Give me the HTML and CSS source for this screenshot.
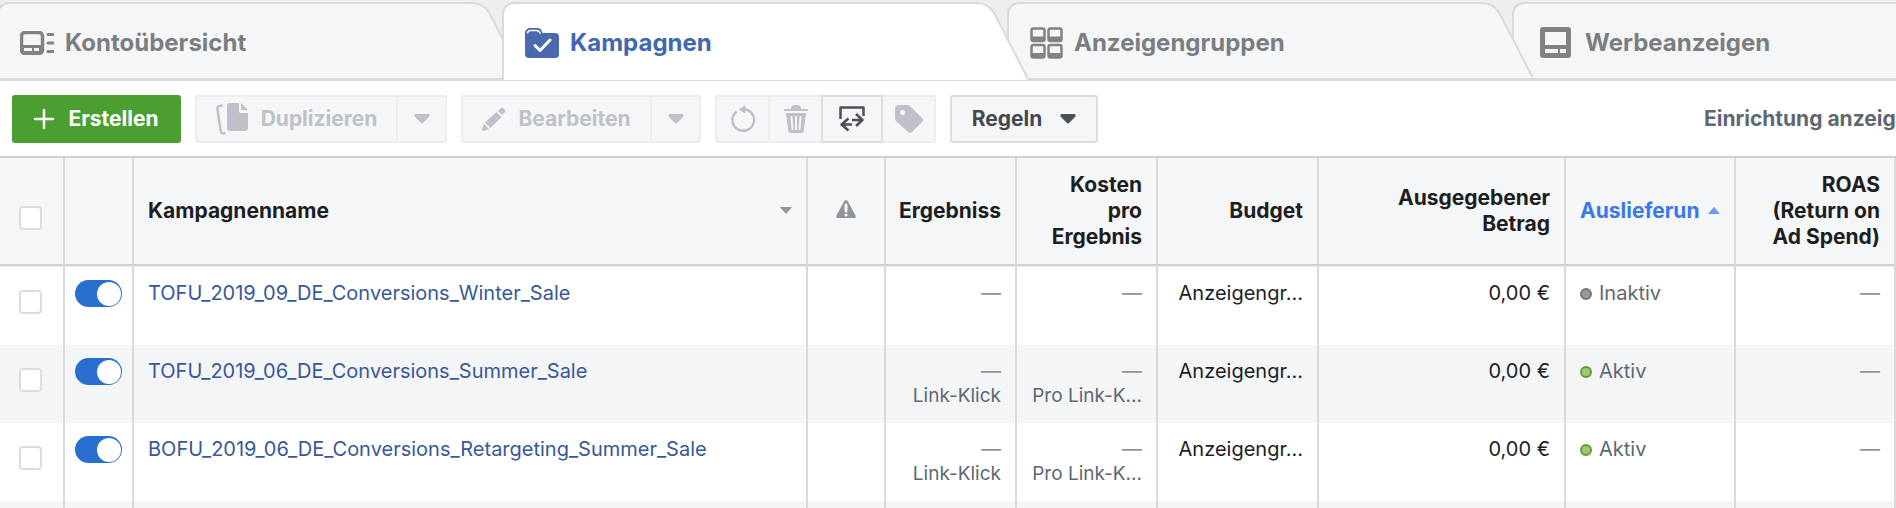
FILE: index.html
```
<!DOCTYPE html>
<html lang="de">
<head>
    <meta charset="UTF-8">
    <meta name="viewport" content="width=device-width, initial-scale=1.0">
    <title>Werbeanzeigenmanager</title>
    <link rel="stylesheet" href="styles.css">
</head>
<body>

    <!-- Reiter -->
    <nav class="tabs">
        <a href="#" class="tab">
            <svg class="tab-cap" viewBox="0 0 54 78"><path class="fill" d="M0 1C9 1 15 4 19 11L53 76V78H0Z"/><path class="line" d="M0 1C9 1 15 4 19 11L53 77"/></svg>
            <svg class="tab-icon" width="34" height="24" viewBox="0 0 34 24"><rect x="1.500" y="1.500" width="21" height="21" rx="3.500" fill="none" stroke="#828282" stroke-width="3.500"/><path d="M2 14h20v8H2z" fill="#828282"/><path d="M4 17h8v3H4zM14 17h5v3h-5z" fill="#f5f6f8"/><path d="M28 3.500h5M28 12h5M28 20.500h5" stroke="#828282" stroke-width="3" stroke-linecap="round"/></svg>
            <span>Kontoübersicht</span>
        </a>
        <a href="#" class="tab active">
            <svg class="tab-cap" viewBox="0 0 54 78"><path class="fill" d="M0 1C9 1 15 4 19 11L53 76V78H0Z"/><path class="line" d="M0 1C9 1 15 4 19 11L53 77"/></svg>
            <svg class="tab-icon" width="34" height="30" viewBox="0 0 34 30"><path d="M0 5a5 5 0 0 1 5-5h7a5 5 0 0 1 5 4l1 1h12a4 4 0 0 1 4 4v17a4 4 0 0 1-4 4H4a4 4 0 0 1-4-4z" fill="#4a69ae"/><path d="M2.500 5.500c0-2 1-3 3-3h6c2 0 3 1 4 3" fill="none" stroke="#fff" stroke-width="1.500"/><path d="M10 17.500l5 5L25 12" fill="none" stroke="#fff" stroke-width="3" stroke-linecap="round" stroke-linejoin="round"/></svg>
            <span>Kampagnen</span>
        </a>
        <a href="#" class="tab">
            <svg class="tab-cap" viewBox="0 0 54 78"><path class="fill" d="M0 1C9 1 15 4 19 11L53 76V78H0Z"/><path class="line" d="M0 1C9 1 15 4 19 11L53 77"/></svg>
            <svg class="tab-icon" width="33" height="32" viewBox="0 0 33 32"><g fill="none" stroke="#828282" stroke-width="2.500"><rect x="1.500" y="1.500" width="13" height="12.500" rx="2"/><rect x="18.500" y="1.500" width="13" height="12.500" rx="2"/><rect x="1.500" y="18" width="13" height="12.500" rx="2"/><rect x="18.500" y="18" width="13" height="12.500" rx="2"/></g><path d="M2 9.500h12v5H2zM19 9.500h12v5H19zM2 26h12v5H2zM19 26h12v5H19z" fill="#828282"/></svg>
            <span>Anzeigengruppen</span>
        </a>
        <a href="#" class="tab last">
            <svg class="tab-icon" width="31" height="31" viewBox="0 0 31 31"><path fill-rule="evenodd" d="M3 0h25a3 3 0 0 1 3 3v25a3 3 0 0 1-3 3H3a3 3 0 0 1-3-3V3a3 3 0 0 1 3-3zM5 5v13h21V5zM5 22v4h13v-4zM20 22v4h6v-4z" fill="#828282"/></svg>
            <span>Werbeanzeigen</span>
        </a>
    </nav>

    <!-- Werkzeugleiste -->
    <div class="toolbar">
        <button class="btn create">
            <svg width="20" height="20" viewBox="0 0 20 20"><path d="M10 1v18M1 10h18" stroke="#fff" stroke-width="2.500" stroke-linecap="round"/></svg>
            Erstellen
        </button>

        <div class="group">
            <button class="btn duplicate" disabled>
                <svg width="33" height="33" viewBox="0 0 33 33"><path d="M7 3.500L4 4c-2 0-3 1-2.500 3l3 21c0 3 2 4 5 3" fill="none" stroke="#bec1c9" stroke-width="2.500"/><path d="M14 1h9v8a2 2 0 0 0 2 2h7v15a3 3 0 0 1-3 3H14a3 3 0 0 1-3-3V4a3 3 0 0 1 3-3zM25 1l7 7h-7z" fill="#bec1c9"/></svg>
                Duplizieren
            </button>
            <button class="btn arrow" disabled aria-label="Mehr Optionen zum Duplizieren">
                <svg width="16" height="10" viewBox="0 0 16 10"><path d="M2 0h12c2 0 2 2 1 3L9 9q-1 1-2 0L1 3C0 2 0 0 2 0z" fill="#bec1c9"/></svg>
            </button>
        </div>

        <div class="group">
            <button class="btn edit" disabled>
                <svg width="24" height="24" viewBox="0 0 24 24"><path d="M16 4l3-3q1-1 2 0l2 2q1 1 0 2l-3 3zM14.500 5l5 5L8.500 21l-5.500-5.500zM2 17l5 5-5 2q-2 0-2-2z" fill="#bec1c9"/></svg>
                Bearbeiten
            </button>
            <button class="btn arrow" disabled aria-label="Mehr Optionen zum Bearbeiten">
                <svg width="16" height="10" viewBox="0 0 16 10"><path d="M2 0h12c2 0 2 2 1 3L9 9q-1 1-2 0L1 3C0 2 0 0 2 0z" fill="#bec1c9"/></svg>
            </button>
        </div>

        <div class="group icons">
            <button class="btn" disabled aria-label="Zurücksetzen">
                <svg width="26" height="28" viewBox="0 0 26 28"><path d="M6 7a10.800 10.800 0 1 0 7-2.800" fill="none" stroke="#bec1c9" stroke-width="2.500" stroke-linecap="round"/><path d="M15 1v7L9.500 4.500z" fill="#bec1c9" stroke="#bec1c9" stroke-linejoin="round"/></svg>
            </button>
            <button class="btn" disabled aria-label="Löschen">
                <svg width="24" height="28" viewBox="0 0 24 28"><path d="M1 5h22M8 4q0-3 3-3h2q3 0 3 3" fill="#bec1c9" stroke="#bec1c9" stroke-width="2" stroke-linecap="round"/><path d="M2 8h20l-2 17q0 3-3 3H7q-3 0-3-3z" fill="#bec1c9"/><path d="M7.500 12l1 12M12 12v12M16.500 12l-1 12" stroke="#f5f6f8" stroke-width="2" stroke-linecap="round"/></svg>
            </button>
            <button class="btn selected" aria-label="Exportieren und importieren">
                <svg width="26" height="26" viewBox="0 0 26 26" fill="none" stroke="#4b4f56" stroke-width="2.500" stroke-linejoin="round"><path d="M1.500 13V1.500h23V10"/><path d="M13 14h11M17 8l6.500 6-6.500 6M13 18.500H3M9.500 12.500l-7 6 7 6"/></svg>
            </button>
            <button class="btn" disabled aria-label="Tag hinzufügen">
                <svg width="28" height="28" viewBox="0 0 28 28"><path fill-rule="evenodd" d="M0 4a4 4 0 0 1 4-4h8q2 0 3 1l12 12q2 2 0 4L17 27q-2 2-4 0L1 16q-1-1-1-3zM7.500 5a2.500 2.500 0 1 0 0 5 2.500 2.500 0 0 0 0-5z" fill="#bec1c9"/></svg>
            </button>
        </div>

        <button class="btn rules">
            Regeln
            <svg width="16" height="10" viewBox="0 0 16 10"><path d="M2 0h12c2 0 2 2 1 3L9 9q-1 1-2 0L1 3C0 2 0 0 2 0z" fill="#4b4f56"/></svg>
        </button>

        <a href="#" class="setup">Einrichtung anzeig</a>
    </div>

    <!-- Kampagnentabelle -->
    <table class="campaigns">
        <colgroup>
            <col class="c-check">
            <col class="c-toggle">
            <col>
            <col class="c-warn">
            <col class="c-result">
            <col class="c-cost">
            <col class="c-budget">
            <col class="c-spent">
            <col class="c-status">
            <col class="c-roas">
        </colgroup>
        <thead>
            <tr>
                <th class="check"><input type="checkbox" aria-label="Alle auswählen"></th>
                <th></th>
                <th><div class="sort"><span>Kampagnenname</span><svg width="12" height="8" viewBox="0 0 12 8"><path d="M0 0h12L6 7z" fill="#90949c"/></svg></div></th>
                <th class="warn"><svg width="20" height="18" viewBox="0 0 20 18"><path d="M8 1.500q2-3 4 0l7.500 14q1 2.500-1.500 2.500H2q-2.500 0-1.500-2.500z" fill="#90949c"/><path d="M10 5v6" stroke="#f5f6f8" stroke-width="3" stroke-linecap="round"/><circle cx="10" cy="15" r="1.600" fill="#f5f6f8"/></svg></th>
                <th class="num tight">Ergebniss</th>
                <th class="num">Kosten<br>pro<br>Ergebnis</th>
                <th class="num">Budget</th>
                <th class="num">Ausgegebener<br>Betrag</th>
                <th class="sorted"><div class="sort"><span>Auslieferun</span><svg width="12" height="8" viewBox="0 0 12 8"><path d="M0 7h12L6 0z" fill="#6798f5"/></svg></div></th>
                <th class="num">ROAS<br>(Return on<br>Ad Spend)</th>
            </tr>
        </thead>
        <tbody>
            <tr>
                <td class="check"><input type="checkbox" aria-label="Winter Sale auswählen"></td>
                <td class="switch"><input type="checkbox" class="toggle" checked aria-label="Winter Sale ein/aus"></td>
                <td><a href="#">TOFU_2019_09_DE_Conversions_Winter_Sale</a></td>
                <td></td>
                <td class="num dash">—</td>
                <td class="num dash">—</td>
                <td class="num">Anzeigengr...</td>
                <td class="num">0,00 €</td>
                <td class="status"><i class="dot"></i>Inaktiv</td>
                <td class="num dash">—</td>
            </tr>
            <tr>
                <td class="check"><input type="checkbox" aria-label="Summer Sale auswählen"></td>
                <td class="switch"><input type="checkbox" class="toggle" checked aria-label="Summer Sale ein/aus"></td>
                <td><a href="#">TOFU_2019_06_DE_Conversions_Summer_Sale</a></td>
                <td></td>
                <td class="num dash">—<small>Link-Klick</small></td>
                <td class="num dash">—<small>Pro Link-K...</small></td>
                <td class="num">Anzeigengr...</td>
                <td class="num">0,00 €</td>
                <td class="status"><i class="dot on"></i>Aktiv</td>
                <td class="num dash">—</td>
            </tr>
            <tr>
                <td class="check"><input type="checkbox" aria-label="Retargeting auswählen"></td>
                <td class="switch"><input type="checkbox" class="toggle" checked aria-label="Retargeting ein/aus"></td>
                <td><a href="#">BOFU_2019_06_DE_Conversions_Retargeting_Summer_Sale</a></td>
                <td></td>
                <td class="num dash">—<small>Link-Klick</small></td>
                <td class="num dash">—<small>Pro Link-K...</small></td>
                <td class="num">Anzeigengr...</td>
                <td class="num">0,00 €</td>
                <td class="status"><i class="dot on"></i>Aktiv</td>
                <td class="num dash">—</td>
            </tr>
            <tr class="rest">
                <td></td><td></td><td></td><td></td><td></td><td></td><td></td><td></td><td></td><td></td>
            </tr>
        </tbody>
    </table>

</body>
</html>
```

FILE: styles.css
```
* {
    box-sizing: border-box;
}

body {
    margin: 0;
    overflow-x: hidden;
    background-color: #fff;
    color: #1c1e21;
    font-family: Inter, "Liberation Sans", sans-serif;
    font-size: 20px;
    line-height: 26px;
}

a {
    color: #385898;
    text-decoration: none;
}

svg {
    flex: none;
}

/* Reiter */
.tabs {
    display: flex;
    height: 81px;
    padding-top: 2px;
    margin-left: -3px;
    background-color: #edeef0;
    border-bottom: 1px solid #d9dadc;
}

.tab {
    position: relative;
    display: flex;
    align-items: center;
    flex: 0 0 505px;
    padding-top: 3px;
    padding-left: 23px;
    color: #7b7d80;
    font-size: 24px;
    font-weight: 700;
}

/* linke Kante und Oberkante, die Schräge rechts kommt aus .tab-cap */
.tab::before {
    content: "";
    position: absolute;
    top: 0;
    bottom: 0;
    left: 0;
    width: 474px;
    border: 2px solid #d9dadc;
    border-right: none;
    border-radius: 12px 0 0 0;
    background-color: #f5f6f8;
}

.tab-cap {
    position: absolute;
    top: 0;
    left: 473px;
    width: 54px;
    height: 78px;
    z-index: 1;
}

.tab-cap .fill {
    fill: #f5f6f8;
}

.tab-cap .line {
    fill: none;
    stroke: #d9dadc;
    stroke-width: 2;
}

.tab:not(.active) .tab-cap {
    border-bottom: 2px solid #d9dadc;
}

.tab:first-child .tab-cap {
    z-index: 0;
}

.tab-icon,
.tab span {
    position: relative;
    z-index: 2;
}

.tab span {
    margin-left: 11px;
}

.tab.active {
    color: #4267b2;
}

.tab.active::before {
    z-index: 1;
    background-color: #fff;
    border-bottom: none;
}

.tab.active .tab-cap .fill {
    fill: #fff;
}

.tab.last {
    flex: 1 0 0;
    padding-left: 28px;
}

.tab.last::before {
    width: 100%;
}

.tab.last span {
    margin-left: 14px;
}

/* Werkzeugleiste */
.toolbar {
    display: flex;
    align-items: center;
    gap: 14px;
    height: 75px;
    padding-left: 12px;
}

.btn {
    display: flex;
    align-items: center;
    justify-content: center;
    flex: none;
    height: 48px;
    margin: 0;
    padding: 0;
    background-color: #f5f6f8;
    border: 2px solid #dadde1;
    border-radius: 3px;
    color: #444950;
    font-family: inherit;
    font-size: 21px;
    font-weight: 700;
}

.btn:disabled {
    border-color: #ebedf0;
    color: #bec1c9;
}

.create {
    width: 169px;
    gap: 14px;
    background-color: #4a9f30;
    border-color: #4a9f30;
    color: #fff;
}

.group {
    display: flex;
}

.group .btn + .btn {
    margin-left: -2px;
}

.group .btn:not(:first-child) {
    border-top-left-radius: 0;
    border-bottom-left-radius: 0;
}

.group .btn:not(:last-child) {
    border-top-right-radius: 0;
    border-bottom-right-radius: 0;
}

.duplicate {
    width: 203px;
    gap: 12px;
}

.edit {
    width: 191px;
    gap: 12px;
}

.arrow {
    width: 51px;
}

.icons .btn {
    width: 55px;
}

.icons .selected {
    position: relative;
    width: 62px;
}

.rules {
    width: 148px;
    gap: 18px;
}

.setup {
    flex: none;
    width: 192px;
    margin-left: auto;
    color: #606770;
    font-size: 21px;
    font-weight: 700;
    white-space: nowrap;
}

/* Tabelle */
.campaigns {
    width: 100%;
    table-layout: fixed;
    border-collapse: separate;
    border-spacing: 0;
    border-top: 2px solid #cfd1d4;
}

.c-check { width: 65px; }
.c-toggle { width: 69px; }
.c-warn { width: 78px; }
.c-result { width: 131px; }
.c-cost { width: 141px; }
.c-budget { width: 161px; }
.c-spent { width: 247px; }
.c-status { width: 170px; }
.c-roas { width: 160px; }

.campaigns th,
.campaigns td {
    padding: 0 14px;
    border-right: 2px solid #d9dadc;
    text-align: left;
    white-space: nowrap;
}

.campaigns th {
    height: 108px;
    background-color: #f5f6f8;
    border-bottom: 2px solid #cfd1d4;
    font-size: 21px;
    font-weight: 700;
}

.campaigns td {
    height: 78px;
    padding-top: 13px;
    vertical-align: top;
}

.campaigns tbody tr:first-child td {
    height: 79px;
    border-top: 1px solid #e9ebee;
}

.campaigns tbody tr:nth-child(even) {
    background-color: #f4f5f7;
}

.campaigns .rest td {
    height: 7px;
    padding: 0;
}

.campaigns .num {
    text-align: right;
}

.campaigns .tight {
    padding-left: 0;
}

.campaigns .warn {
    text-align: center;
}

.sort {
    display: flex;
    align-items: center;
    justify-content: space-between;
}

.sorted {
    color: #3b78e7;
}

.campaigns .check {
    padding-left: 19px;
}

.campaigns th.check {
    padding-top: 14px;
}

.campaigns td.check {
    padding-top: 23px;
}

.check input {
    appearance: none;
    display: block;
    width: 23px;
    height: 24px;
    margin: 0;
    background-color: #fff;
    border: 2px solid #dadde1;
    border-radius: 4px;
}

.campaigns .switch {
    padding-left: 10px;
}

.toggle {
    appearance: none;
    display: flex;
    justify-content: flex-end;
    width: 47px;
    height: 27px;
    margin: 0;
    padding: 2px 1px;
    background-color: #286fd0;
    border-radius: 14px;
}

.toggle::before {
    content: "";
    width: 24px;
    height: 24px;
    background-color: #fff;
    border-radius: 50%;
}

.dash {
    color: #90949c;
}

.campaigns small {
    display: block;
    color: #606770;
    font-size: 19px;
    line-height: 24px;
}

.status {
    color: #606770;
}

.dot {
    display: inline-block;
    width: 12px;
    height: 12px;
    margin-right: 7px;
    background-color: #999;
    border: 2px solid #777;
    border-radius: 50%;
}

.dot.on {
    background-color: #a3c76d;
    border-color: #5d9f34;
}
```
